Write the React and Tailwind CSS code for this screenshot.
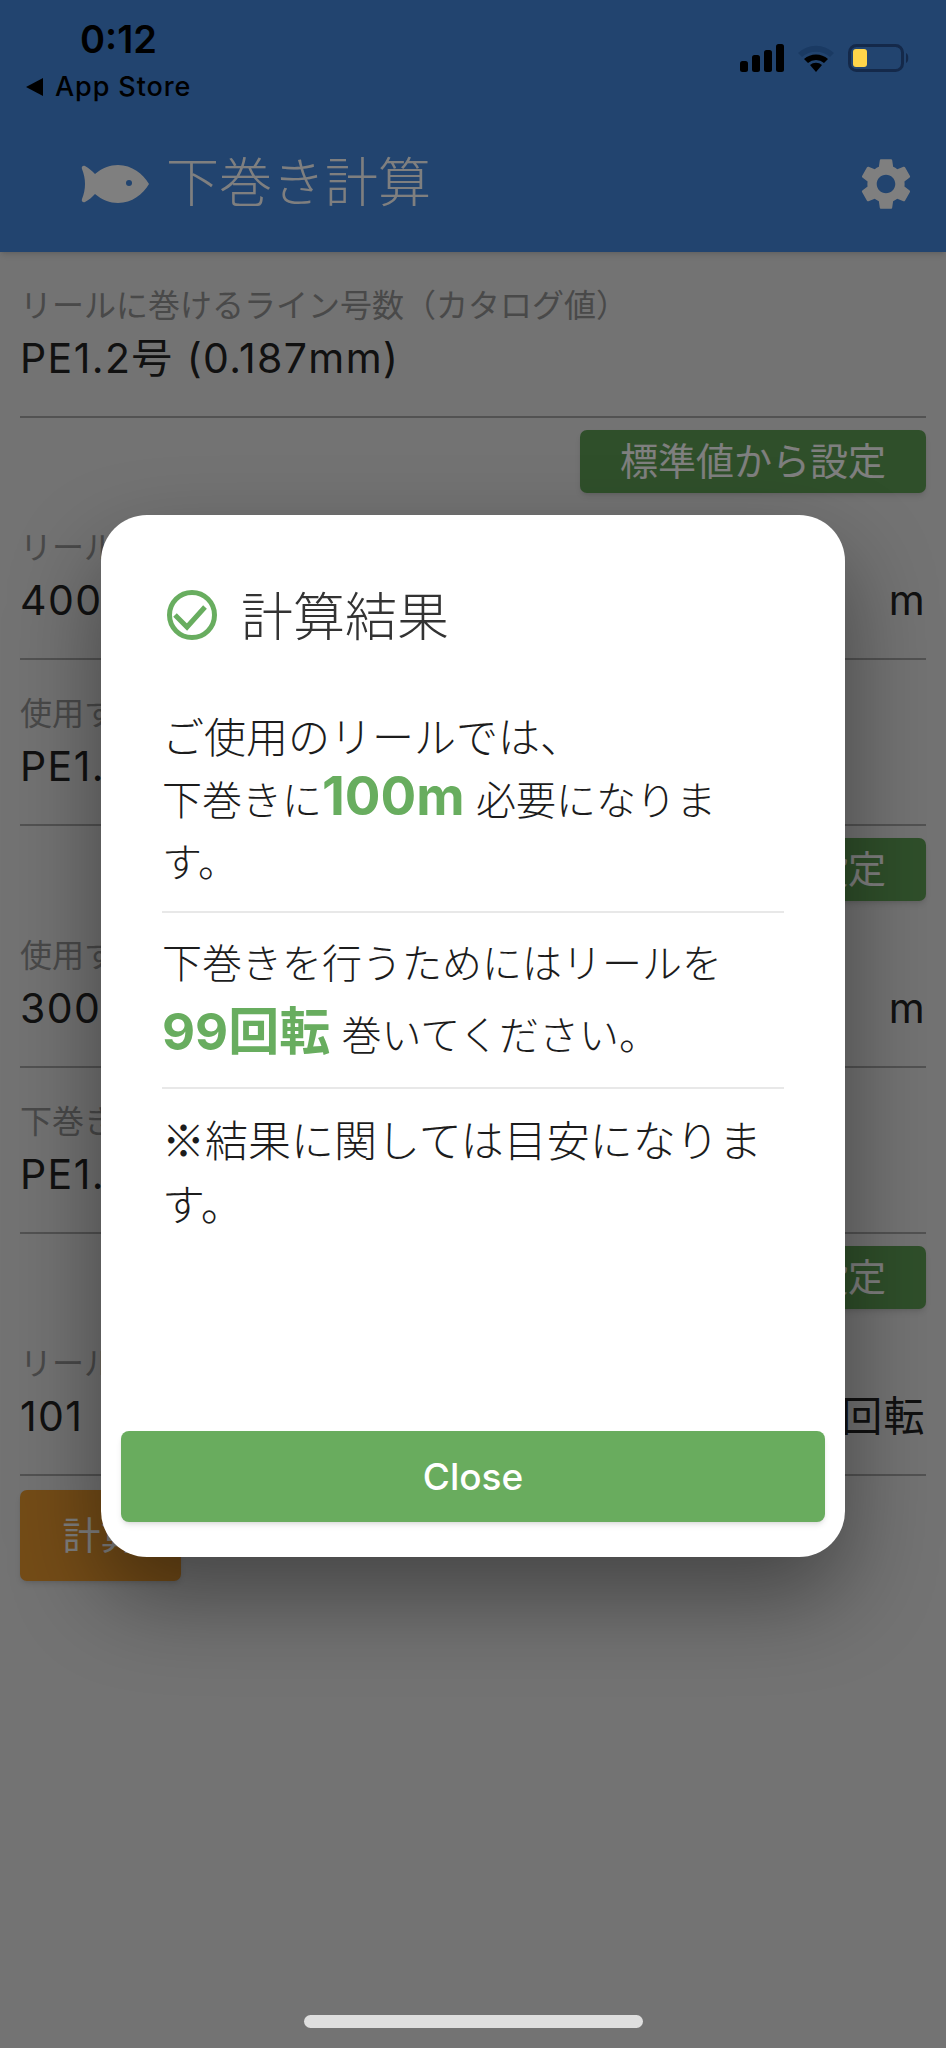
import React from 'react';
import { MdSettings } from 'react-icons/md';

const jp = "font-['Inter','Noto_Sans_CJK_JP',sans-serif]";

const Row = ({ label, value, unit, className = '' }) => (
    <div className={`h-[132px] border-b-2 border-[#a4a4a4] ${className}`}>
        <div className="h-[40px] text-[32px] leading-[40px] text-[#929292] whitespace-nowrap">{label}</div>
        <div className="mt-[7px] h-[50px] flex justify-between items-center text-[41px] tracking-[1.4px] leading-[50px] text-[#222222] whitespace-nowrap">
            <span>{value}</span>
            {unit && <span>{unit}</span>}
        </div>
    </div>
);

const PresetButton = () => (
    <div className="mt-[12px] mb-[35px] flex justify-end">
        <button className="w-[346px] h-[63px] rounded-[7px] bg-[#5f9f54] text-[38px] text-white shadow-md">標準値から設定</button>
    </div>
);

const Fish = () => (
    <svg width="70" height="40" viewBox="0 0 70 40" className="text-white">
        <path d="M2 5 C1 3 3 1 5 2 C9 4 12 7 15 10 C22 4 30 1 38 1 C52 1 63 10 69 20 C63 30 52 39 38 39 C30 39 22 36 15 30 C12 33 9 36 5 38 C3 39 1 37 2 35 C4 30 5 25 5 20 C5 15 4 10 2 5 Z" fill="currentColor" />
        <circle cx="49" cy="19" r="3" fill="#4488de" />
    </svg>
);

const SignalBars = () => (
    <svg width="44" height="28" viewBox="0 0 44 28" fill="#000">
        <rect x="0" y="17" width="8" height="11" rx="2.5" />
        <rect x="12" y="11" width="8" height="17" rx="2.5" />
        <rect x="24" y="6" width="8" height="22" rx="2.5" />
        <rect x="36" y="0" width="8" height="28" rx="2.5" />
    </svg>
);

const Wifi = () => (
    <svg width="36" height="28" viewBox="0 0 36 28">
        <path d="M0 9 A26 26 0 0 1 36 9 L32 13 A21 21 0 0 0 4 13 Z" fill="#1a3a63" />
        <path d="M6 15 A18 18 0 0 1 30 15 L26 19 A12 12 0 0 0 10 19 Z" fill="#000" />
        <path d="M12 21 A9 9 0 0 1 24 21 L18 28 Z" fill="#000" />
    </svg>
);

const Battery = () => (
    <svg width="62" height="28" viewBox="0 0 62 28">
        <rect x="1.5" y="1.5" width="53" height="25" rx="7" fill="none" stroke="#14294a" strokeWidth="3" />
        <rect x="5" y="5" width="14" height="18" rx="3" fill="#ffd54a" />
        <path d="M58 9 C61 10 61 18 58 19 Z" fill="#14294a" />
    </svg>
);

const CheckCircle = () => (
    <svg width="50" height="50" viewBox="0 0 50 50" fill="none" stroke="#68ad5f" strokeWidth="5" className="mb-[6px]">
        <circle cx="25" cy="25" r="22.5" />
        <path d="M8 25 L20 37 L38 17" />
    </svg>
);

export default function App() {
    return (
        <div className={`relative w-[946px] h-[2048px] overflow-hidden bg-[#e6e6e6] ${jp}`}>
            {/* header, status bar sits above the dim layer */}
            <header className="h-[252px] bg-[#4488de] shadow-md">
                <div className="relative z-30 h-[120px] flex justify-between items-start">
                    <div className="pl-[26px] pt-[17px] text-black">
                        <div className="ml-[54px] h-[44px] text-[38px] leading-[44px] font-semibold">0:12</div>
                        <div className="mt-[4px] flex items-center gap-[12px] text-[27px] leading-[44px] font-medium tracking-[0.9px]">
                            <span className="w-0 h-0 border-y-[9px] border-y-transparent border-r-[17px] border-r-black"></span>
                            App Store
                        </div>
                    </div>
                    <div className="pt-[44px] pr-[36px] flex items-start gap-[14px]">
                        <SignalBars />
                        <Wifi />
                        <Battery />
                    </div>
                </div>
                <div className="h-[128px] pl-[80px] pr-[29px] flex items-center text-white">
                    <Fish />
                    <h1 className="ml-[16px] text-[53px] font-light whitespace-nowrap">下巻き計算</h1>
                    <MdSettings className="ml-auto text-[62px]" />
                </div>
            </header>

            <main className="px-[20px] pt-[34px]">
                <Row label="リールに巻けるライン号数（カタログ値）" value="PE1.2号 (0.187mm)" />
                <PresetButton />
                <Row label="リールに巻かれている糸の長さ" value="400" unit="m" className="mb-[34px]" />
                <Row label="使用するライン号数" value="PE1.2号 (0.187mm)" />
                <PresetButton />
                <Row label="使用するラインの長さ" value="300" unit="m" className="mb-[34px]" />
                <Row label="下巻きするライン号数" value="PE1.2号 (0.187mm)" />
                <PresetButton />
                <Row label="リールの回転数" value="101" unit="回転" />
                <button className="mt-[14px] w-[161px] h-[91px] rounded-[7px] bg-[#e8982f] text-[38px] text-white shadow-md">計算</button>
            </main>

            {/* dim layer */}
            <div className="absolute inset-0 z-10 bg-black/50"></div>

            {/* result dialog */}
            <div className="absolute z-20 left-[101px] top-[515px] w-[744px] h-[1042px] rounded-[46px] bg-white shadow-[0_40px_90px_rgba(0,0,0,0.4)] flex flex-col">
                <div className="px-[61px] pt-[76px] flex-1">
                    <div className="flex items-center gap-[24px] ml-[5px] h-[54px]">
                        <CheckCircle />
                        <h2 className="text-[52px] font-light text-[#333333] whitespace-nowrap">計算結果</h2>
                    </div>
                    <div className="mt-[62px] text-[40px] text-[#1c1c1c] font-light">
                        <p className="h-[206px] border-b-2 border-[#e8e8e8] leading-[62px]">
                            <span className="text-[42px]">ご使用のリールでは、</span><br />
                            下巻きに<span className="text-[#68ad5f] text-[53px] font-bold leading-none">100m</span> 必要になります。
                        </p>
                        <p className="mt-[15px] h-[161px] border-b-2 border-[#e8e8e8] leading-[72px]">
                            下巻きを行うためにはリールを<br />
                            <span className="text-[#68ad5f] text-[51px] font-bold leading-none">99回転</span> 巻いてください。
                        </p>
                        <p className="mt-[17px] leading-[64px] text-[43px] font-['Noto_Sans_CJK_JP',sans-serif]">
                            ※結果に関しては目安になります。
                        </p>
                    </div>
                </div>
                <div className="px-[20px] pb-[35px]">
                    <button className="w-full h-[91px] rounded-[8px] bg-[#69ac5e] text-white text-[37px] font-medium shadow-md">Close</button>
                </div>
            </div>

            {/* home indicator */}
            <div className="absolute z-30 left-[304px] top-[2015px] w-[339px] h-[13px] rounded-full bg-[#dedede]"></div>
        </div>
    );
}
